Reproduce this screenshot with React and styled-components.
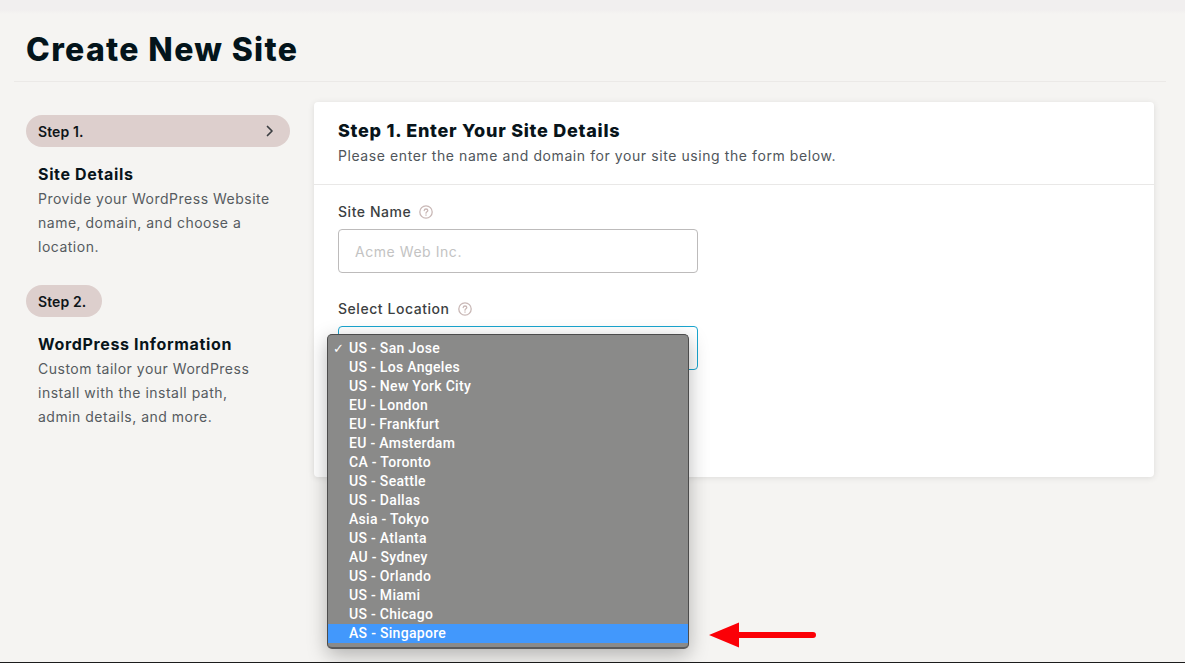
import React from "react";
import styled, { createGlobalStyle } from "styled-components";

const GlobalStyle = createGlobalStyle`
	html, body {
		margin: 0;
		padding: 0;
		background: #f5f4f2;
	}
	body {
		font-family: "Inter", "Liberation Sans", sans-serif;
		overflow: hidden;
	}
`;

const locations = [
	"US - San Jose",
	"US - Los Angeles",
	"US - New York City",
	"EU - London",
	"EU - Frankfurt",
	"EU - Amsterdam",
	"CA - Toronto",
	"US - Seattle",
	"US - Dallas",
	"Asia - Tokyo",
	"US - Atlanta",
	"AU - Sydney",
	"US - Orlando",
	"US - Miami",
	"US - Chicago",
	"AS - Singapore",
];

const HelpIcon = () => (
	<HelpSvg width="14" height="14" viewBox="0 0 14 14" fill="none" stroke="#c9b8b6" strokeWidth="1.3" strokeLinecap="round">
		<circle cx="7" cy="7" r="6.2" />
		<path d="M5.2 5.5C5.3 4.5 6 4 7 4c1 0 1.8.6 1.8 1.5 0 1.3-1.8 1.4-1.8 2.7" />
		<path d="M7 10v.2" />
	</HelpSvg>
);

const App = () => {
	return (
		<Page>
			<GlobalStyle />
			<Header>
				<Title>Create New Site</Title>
			</Header>
			<Content>
				<Sidebar>
					<StepPill $wide>
						Step 1.
						<svg width="10" height="12" viewBox="0 0 10 12" fill="none" stroke="#3b3f42" strokeWidth="1.7" strokeLinecap="round" strokeLinejoin="round">
							<path d="M2.5 1.5 7 6l-4.5 4.5" />
						</svg>
					</StepPill>
					<StepBody>
						<StepTitle>Site Details</StepTitle>
						<StepText>Provide your WordPress Website name, domain, and choose a location.</StepText>
					</StepBody>
					<StepPill>Step 2.</StepPill>
					<StepBody>
						<StepTitle>WordPress Information</StepTitle>
						<StepText>Custom tailor your WordPress install with the install path, admin details, and more.</StepText>
					</StepBody>
				</Sidebar>
				<Card>
					<CardHeader>
						<CardTitle>Step 1. Enter Your Site Details</CardTitle>
						<CardText>Please enter the name and domain for your site using the form below.</CardText>
					</CardHeader>
					<Form>
						<Field>
							<Label>
								Site Name <HelpIcon />
							</Label>
							<Input placeholder="Acme Web Inc." readOnly />
						</Field>
						<Field>
							<Label>
								Select Location <HelpIcon />
							</Label>
							<SelectWrap>
								<SelectBox />
								<Dropdown>
									{locations.map((name, i) => (
										<Option key={name} $active={i === locations.length - 1}>
											{i === 0 && <Check>✓</Check>}
											{name}
										</Option>
									))}
								</Dropdown>
							</SelectWrap>
						</Field>
					</Form>
				</Card>
			</Content>
			<Arrow width="110" height="28" viewBox="0 0 110 28">
				<path d="M0 14 30 1.5v9.5h74a3 3 0 0 1 0 6H30v9.5z" fill="#fb0007" />
			</Arrow>
			<BottomLine />
		</Page>
	);
};

const Page = styled.div`
	position: relative;
	width: 1185px;
	height: 663px;
	overflow: hidden;
	background: linear-gradient(#f1efef 0, #f1efef 10px, #f5f4f2 14px);
`;

const Header = styled.header`
	margin: 0 19px 0 14px;
	height: 82px;
	padding: 30px 12px 0;
	box-sizing: border-box;
	border-bottom: 1px solid #ebe9e7;
`;

const Title = styled.h1`
	margin: 0;
	font-size: 32px;
	line-height: 40px;
	font-weight: 800;
	color: #03141b;
	letter-spacing: 1.35px;
`;

const Content = styled.div`
	display: flex;
	gap: 24px;
	padding: 20px 31px 0 26px;
`;

const Sidebar = styled.aside`
	width: 264px;
	flex: none;
	padding-top: 13px;
`;

const StepPill = styled.div`
	display: flex;
	align-items: center;
	justify-content: space-between;
	height: 32px;
	padding: 0 15px 0 12px;
	box-sizing: border-box;
	width: ${(p) => (p.$wide ? "264px" : "76px")};
	border-radius: 16px;
	background: #ddcfcd;
	color: #0e1519;
	font-size: 14px;
	font-weight: 600;
	letter-spacing: 0.1px;
	white-space: nowrap;
`;

const StepBody = styled.div`
	padding: 16px 12px 26px;
`;

const StepTitle = styled.div`
	font-size: 16px;
	line-height: 22px;
	font-weight: 700;
	color: #08141a;
	letter-spacing: 0.65px;
`;

const StepText = styled.p`
	margin: 2px 0 0;
	max-width: 234px;
	font-size: 14px;
	line-height: 24px;
	color: #555b60;
	letter-spacing: 0.5px;
`;

const Card = styled.main`
	width: 840px;
	height: 375px;
	flex: none;
	background: #fff;
	border-radius: 4px;
	box-shadow: 0 1px 6px rgba(0, 0, 0, 0.1);
`;

const CardHeader = styled.div`
	height: 83px;
	box-sizing: border-box;
	padding: 18px 24px 0;
	border-bottom: 1px solid #e9e8e7;
`;

const CardTitle = styled.h2`
	margin: 0;
	font-size: 18px;
	line-height: 22px;
	font-weight: 800;
	color: #08141a;
	letter-spacing: 0.74px;
`;

const CardText = styled.p`
	margin: 4px 0 0;
	font-size: 14px;
	line-height: 20px;
	color: #50565b;
	letter-spacing: 0.58px;
`;

const Form = styled.div`
	padding: 18px 24px 0;
`;

const Field = styled.div`
	margin-bottom: 27px;
`;

const Label = styled.label`
	display: flex;
	align-items: center;
	gap: 8px;
	height: 18px;
	padding-bottom: 2px;
	box-sizing: border-box;
	margin-bottom: 8px;
	font-size: 14px;
	font-weight: 500;
	color: #3c3f42;
	letter-spacing: 0.55px;
`;

const HelpSvg = styled.svg`
	margin-top: 2px;
`;

const Input = styled.input`
	display: block;
	width: 360px;
	height: 44px;
	box-sizing: border-box;
	padding: 0 16px;
	border: 1px solid #bdbbbb;
	border-radius: 4px;
	background: #fff;
	font-family: inherit;
	font-size: 14px;
	letter-spacing: 0.55px;
	outline: none;

	&::placeholder {
		color: #c3c3c3;
	}
`;

const SelectWrap = styled.div`
	position: relative;
`;

const SelectBox = styled.div`
	width: 360px;
	height: 44px;
	box-sizing: border-box;
	border: 1px solid #1aa5cf;
	border-radius: 4px;
	background: #fff;
`;

const Dropdown = styled.ul`
	position: absolute;
	left: -11px;
	top: 8px;
	width: 362px;
	margin: 0;
	padding: 4px 0 4px;
	box-sizing: border-box;
	list-style: none;
	background: #8a8a89;
	border: 1px solid #4c4c4c;
	border-bottom: 2px solid #5a5a5a;
	border-radius: 5px;
	box-shadow: 0 6px 20px rgba(0, 0, 0, 0.28);
	z-index: 2;
`;

const Option = styled.li`
	position: relative;
	height: 19px;
	padding-left: 21px;
	background: ${(p) => (p.$active ? "#4298fc" : "transparent")};
	color: #fff;
	font-family: "Roboto", "Liberation Sans", sans-serif;
	font-size: 14px;
	font-weight: 500;
	line-height: 19px;
	letter-spacing: 0.3px;
`;

const Check = styled.span`
	position: absolute;
	left: 5px;
	top: 0;
	font-family: "DejaVu Sans", sans-serif;
	font-size: 13px;
`;

const Arrow = styled.svg`
	position: absolute;
	left: 709px;
	top: 621px;
`;

const BottomLine = styled.div`
	position: absolute;
	left: 0;
	right: 0;
	bottom: 0;
	height: 1px;
	background: #1c1c1c;
`;

export default App;
